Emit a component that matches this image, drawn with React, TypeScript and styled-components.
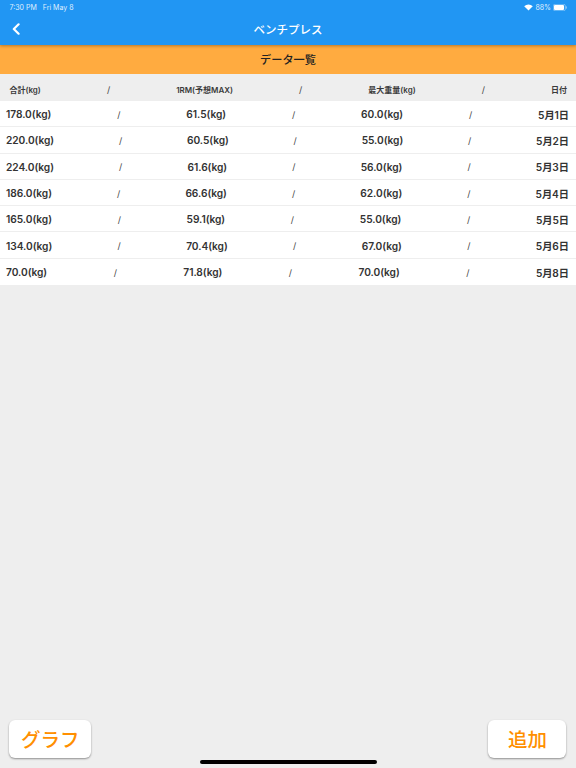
import React from "react";
import styled, { createGlobalStyle } from "styled-components";

const Global = createGlobalStyle`
  html, body { margin: 0; padding: 0; }
  body { background: #eeeeee; }
  * { box-sizing: border-box; }
`;

const FONT = `Inter, "Noto Sans CJK JP", sans-serif`;

const Page = styled.div`
  position: relative;
  width: 576px;
  height: 768px;
  display: flex;
  flex-direction: column;
  background: #eeeeee;
  overflow: hidden;
  font-family: ${FONT};
`;

const AppBar = styled.header`
  height: 45px;
  background: #2196f3;
  color: #fff;
  display: flex;
  flex-direction: column;
  box-shadow: 0 1px 3px rgba(0, 0, 0, 0.3);
  position: relative;
  z-index: 2;
`;

const StatusBar = styled.div`
  height: 14px;
  padding: 0 9px 0 9.5px;
  display: flex;
  align-items: center;
  justify-content: space-between;
  font-size: 7px;
  font-weight: 400;
  color: rgba(255, 255, 255, 0.88);
`;

const StatusGroup = styled.div`
  display: flex;
  align-items: center;
  gap: 6px;
`;

const BatteryGroup = styled.div`
  display: flex;
  align-items: center;
  gap: 2px;
`;

const TitleRow = styled.div`
  flex: 1;
  position: relative;
  display: flex;
  align-items: center;
  justify-content: center;
  padding-bottom: 2px;
`;

const Title = styled.h1`
  margin: 0;
  font-size: 11.5px;
  font-weight: 500;
  font-family: ${FONT};
`;

const Back = styled.span`
  position: absolute;
  left: 10.5px;
  top: 9px;
  display: flex;
`;

const SubHeader = styled.div`
  height: 29px;
  background: #ffab40;
  display: flex;
  align-items: center;
  justify-content: center;
  font-size: 11.2px;
  font-weight: 500;
  color: #222;
  padding-bottom: 1px;
`;

const ColumnHead = styled.div`
  height: 27px;
  padding: 4px 9px 0 9.5px;
  display: flex;
  align-items: center;
  justify-content: space-between;
  font-size: 8px;
  font-weight: 600;
  color: #3a3a3a;
`;

const Rows = styled.div`
  background: #fff;
`;

const Row = styled.div`
  height: 26.3px;
  padding: 1px 7px 0 6px;
  display: flex;
  align-items: center;
  justify-content: space-between;
  font-size: 10.2px;
  font-weight: 600;
  letter-spacing: -0.05px;
  color: #333;
  border-bottom: 1px solid #eeeeee;
  &:last-child { border-bottom: 0; }
`;

const Slash = styled.span`
  font-weight: 400;
  font-size: 9px;
  color: #444;
`;

const Spacer = styled.div`
  flex: 1;
`;

const Footer = styled.div`
  display: flex;
  justify-content: space-between;
  align-items: flex-start;
  padding: 0 10px 10px 9px;
`;

const ActionButton = styled.button<{ $w: number }>`
  width: ${(p) => p.$w}px;
  height: 38.5px;
  border: 0;
  border-radius: 6px;
  background: #fff;
  color: #ff8f00;
  font-family: ${FONT};
  font-size: 19.5px;
  font-weight: 500;
  padding: 0 0 0 1px;
  box-shadow: 0 1px 2px rgba(0, 0, 0, 0.4);
`;

const HomeBar = styled.div`
  position: absolute;
  left: 199.5px;
  bottom: 4.5px;
  width: 177.5px;
  height: 3.5px;
  border-radius: 2px;
  background: #000;
`;

const heads = ["合計(kg)", "1RM(予想MAX)", "最大重量(kg)", "日付"];
const data = [
  ["178.0(kg)", "61.5(kg)", "60.0(kg)", "5月1日"],
  ["220.0(kg)", "60.5(kg)", "55.0(kg)", "5月2日"],
  ["224.0(kg)", "61.6(kg)", "56.0(kg)", "5月3日"],
  ["186.0(kg)", "66.6(kg)", "62.0(kg)", "5月4日"],
  ["165.0(kg)", "59.1(kg)", "55.0(kg)", "5月5日"],
  ["134.0(kg)", "70.4(kg)", "67.0(kg)", "5月6日"],
  ["70.0(kg)", "71.8(kg)", "70.0(kg)", "5月8日"],
];

const withSlashes = (cells: string[]) =>
  cells.flatMap((c, i) =>
    i === 0 ? [<span key={c + i}>{c}</span>] : [<Slash key={"s" + i}>/</Slash>, <span key={c + i}>{c}</span>]
  );

export default function App() {
  return (
    <Page>
      <Global />
      <AppBar>
        <StatusBar>
          <StatusGroup>
            <span>7:30 PM</span>
            <span>Fri May 8</span>
          </StatusGroup>
          <BatteryGroup>
            <svg width="9" height="7" viewBox="0 0 9 7" aria-hidden="true">
              <path d="M4.5 6.6 L0.2 2.2 A6.2 6.2 0 0 1 8.8 2.2 Z" fill="#fff" />
            </svg>
            <span>88%</span>
            <svg width="14" height="7" viewBox="0 0 14 7" aria-hidden="true">
              <rect x="0.3" y="0.3" width="12" height="6.4" rx="1.6" fill="none" stroke="#fff" strokeOpacity="0.6" strokeWidth="0.6" />
              <rect x="1" y="1" width="10" height="5" rx="1" fill="#fff" />
              <rect x="12.8" y="2.3" width="0.9" height="2.4" rx="0.4" fill="#fff" fillOpacity="0.6" />
            </svg>
          </BatteryGroup>
        </StatusBar>
        <TitleRow>
          <Back>
            <svg width="10" height="12" viewBox="0 0 10 12" aria-hidden="true">
              <path d="M7.6 1.3 L2.8 6 L7.6 10.7" fill="none" stroke="#fff" strokeWidth="2.2" strokeLinecap="round" strokeLinejoin="round" />
            </svg>
          </Back>
          <Title>ベンチプレス</Title>
        </TitleRow>
      </AppBar>
      <SubHeader>データ一覧</SubHeader>
      <ColumnHead>{withSlashes(heads)}</ColumnHead>
      <Rows>
        {data.map((r) => (
          <Row key={r[3]}>{withSlashes(r)}</Row>
        ))}
      </Rows>
      <Spacer />
      <Footer>
        <ActionButton $w={81.5}>グラフ</ActionButton>
        <ActionButton $w={78}>追加</ActionButton>
      </Footer>
      <HomeBar />
    </Page>
  );
}
